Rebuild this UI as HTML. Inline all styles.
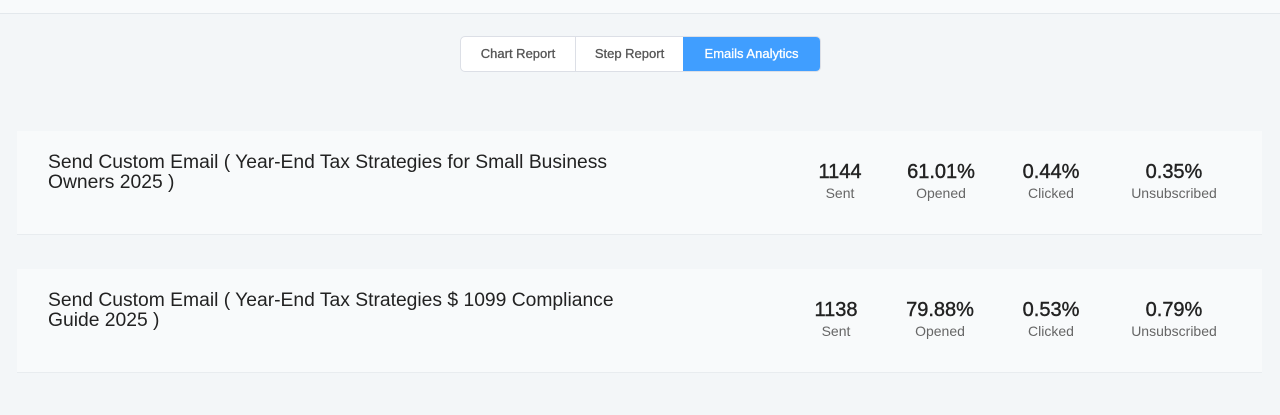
<!DOCTYPE html>
<html><head><style>
body{margin:0;width:1280px;height:415px;background:#f3f6f8;font-family:"Liberation Sans",sans-serif;position:relative;overflow:hidden}
.top{position:absolute;left:0;top:0;width:1280px;height:13px;background:#f8fafb;border-bottom:1px solid #e3e8ec}
.tabs{position:absolute;left:460px;top:36px;height:34px;display:flex;border:1px solid #dcdfe6;border-radius:5px;overflow:hidden;background:#fff}
.tabs div{font-size:13px;color:#555;line-height:34px;text-align:center;-webkit-text-stroke:0.3px}
.card{position:absolute;left:17px;width:1245px;height:103px;background:#f8fafb;border-bottom:1px solid #e8ecef}
.title{position:absolute;left:31px;top:22px;width:620px;font-size:19.3px;line-height:20px;color:#222}
.st{position:absolute;top:30px;text-align:center;transform:translateX(-50%)}
.st b{display:block;font-weight:normal;font-size:20px;color:#222;line-height:22px;-webkit-text-stroke:0.4px}
.st span{display:block;font-size:14px;color:#666;line-height:20px}
</style></head><body>
<div class="top"></div>
<div class="tabs">
<div style="width:114px;border-right:1px solid #dcdfe6">Chart Report</div>
<div style="width:107px">Step Report</div>
<div style="width:137px;background:#409eff;color:#fff">Emails Analytics</div>
</div>
<div class="card" style="top:131px">
<div class="title">Send Custom Email ( Year-End Tax Strategies for Small Business Owners 2025 )</div>
<div class="st" style="left:823px"><b>1144</b><span>Sent</span></div>
<div class="st" style="left:924px"><b>61.01%</b><span>Opened</span></div>
<div class="st" style="left:1034px"><b>0.44%</b><span>Clicked</span></div>
<div class="st" style="left:1157px"><b>0.35%</b><span>Unsubscribed</span></div>
</div>
<div class="card" style="top:269px">
<div class="title">Send Custom Email ( Year-End Tax Strategies $ 1099 Compliance Guide 2025 )</div>
<div class="st" style="left:819px"><b>1138</b><span>Sent</span></div>
<div class="st" style="left:923px"><b>79.88%</b><span>Opened</span></div>
<div class="st" style="left:1034px"><b>0.53%</b><span>Clicked</span></div>
<div class="st" style="left:1157px"><b>0.79%</b><span>Unsubscribed</span></div>
</div>
</body></html>
